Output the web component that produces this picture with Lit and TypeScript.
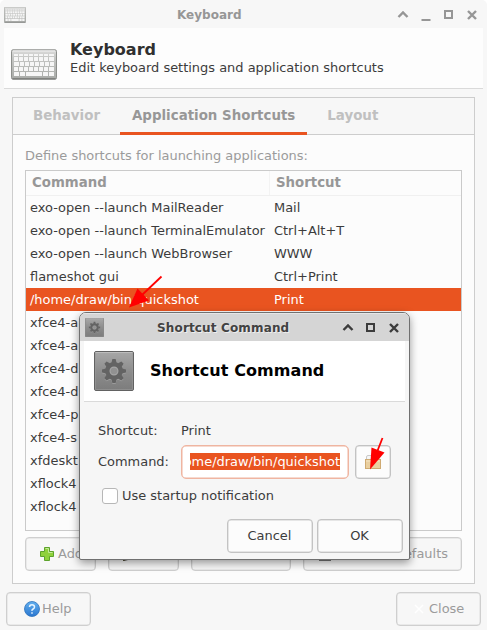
import { LitElement, html, svg, css } from "lit";
import { customElement } from "lit/decorators.js";
import { classMap } from "lit/directives/class-map.js";

const rows: [string, string][] = [
  ["exo-open --launch MailReader", "Mail"],
  ["exo-open --launch TerminalEmulator", "Ctrl+Alt+T"],
  ["exo-open --launch WebBrowser", "WWW"],
  ["flameshot gui", "Ctrl+Print"],
  ["/home/draw/bin/quickshot", "Print"],
  ["xfce4-a", ""],
  ["xfce4-a", ""],
  ["xfce4-d", ""],
  ["xfce4-d", ""],
  ["xfce4-p", ""],
  ["xfce4-s", ""],
  ["xfdeskt", ""],
  ["xflock4", ""],
  ["xflock4", ""],
];
const selectedRow = 4;

// top, height and left edges of the keys in each row
const keyRows: [number, number, number[]][] = [
  [5, 2, [3, 8, 13, 18, 23, 28, 33, 38]],
  [8, 4, [3, 8, 13, 18, 23, 28, 33, 38]],
  [13, 4, [3, 9, 14, 19, 24, 29, 34, 39]],
  [18, 4, [3, 8, 13, 18, 23, 28, 33, 38]],
  [23, 4, [3, 9, 15, 32, 38]],
];

const keyboard = (w: number, h: number) => html`
  <svg width=${w} height=${h} viewBox="0 0 46 31" preserveAspectRatio="none">
    <defs>
      <linearGradient id="kb" x1="0" y1="0" x2="0" y2="1">
        <stop offset="0" stop-color="#dededd" /><stop offset="0.25" stop-color="#c6c7c5" /><stop offset="1" stop-color="#a9aba8" />
      </linearGradient>
    </defs>
    <rect x=".5" y=".8" width="45" height="29.4" rx="1.5" fill="url(#kb)" stroke="#8d8f8c" />
    <path d="M1.5 29.8h43" stroke="#747673" stroke-width="1" />
    <path d="M2 2h42" stroke="#f0f0f0" stroke-width="1" />
    ${keyRows.map(([y, kh, xs]) =>
      xs.map((x, i) => svg`<rect x=${x} y=${y} width=${(xs[i + 1] ?? 44) - x - 1} height=${kh} rx=".3" fill="#f6f6f6" />`)
    )}
  </svg>`;

const teeth = [0, 45, 90, 135, 180, 225, 270, 315];

const gear = (s: number) => html`
  <svg width=${s} height=${s} viewBox="0 0 40 40">
    <defs>
      <linearGradient id="gb" x1="0" y1="0" x2="0" y2="1">
        <stop offset="0" stop-color="#a8a8a8" /><stop offset=".5" stop-color="#8d8d8d" /><stop offset="1" stop-color="#7c7c7c" />
      </linearGradient>
    </defs>
    <rect x=".5" y=".5" width="39" height="39" rx="1.5" fill="url(#gb)" stroke="#626262" />
    <path d="M1.5 1.5h37" stroke="#bdbdbd" />
    <path d="M1.5 2v36.5h37V2" fill="none" stroke="#999" stroke-opacity=".6" />
    <g transform="translate(20 20.700)" fill="#a2a2a2"><circle r="9" />
      ${teeth.map((a) => svg`<path transform=${`rotate(${a})`} d="M-2.6-8L-1.6-12h3.2L2.6-8z" />`)}
    </g>
    <g transform="translate(20 20)" fill="#636363"><circle r="8.9" />
      ${teeth.map((a) => svg`<path transform=${`rotate(${a})`} d="M-2.6-8L-1.6-12h3.2L2.6-8z" />`)}
      <circle r="3.9" fill="#919191" stroke="#a5a5a5" stroke-width="1.2" />
    </g>
  </svg>`;

const chevron = svg`<path d="M1.5 8L6 3.5 10.5 8" fill="none" stroke="currentColor" stroke-width="2.4" />`;
const minimize = svg`<path d="M1.5 11h9" stroke="currentColor" stroke-width="2" />`;
const maximize = svg`<rect x="2" y="2" width="7" height="7" fill="none" stroke="currentColor" stroke-width="2" />`;
const cross = svg`<path d="M2 2l8 8M10 2l-8 8" stroke="currentColor" stroke-width="2.4" />`;
const control = (glyph: unknown) => html`<svg width="12" height="12" viewBox="0 0 12 12">${glyph}</svg>`;

@customElement("shortcut-dialog")
class ShortcutDialog extends LitElement {
  static styles = css`
    :host {
      display: block; box-sizing: border-box; width: 331px; height: 248px;
      background: #f6f6f6; border: 1px solid #707070; border-radius: 7px 7px 2px 2px;
      box-shadow: 0 3px 9px rgba(0, 0, 0, 0.4); overflow: hidden; color: #3c3c3c;
    }
    svg { display: block; flex: none; }
    .bar { display: flex; align-items: center; height: 28px; padding: 0 9px 0 5px; background: #d5d5d5; box-shadow: inset 0 1px #e6e6e6; box-sizing: border-box; }
    .title { flex: 1; padding: 1px 0 0 53px; font-size: 12px; font-weight: bold; text-shadow: 1px 1px #eee; color: #424242; letter-spacing: 0.15px; }
    .controls { display: flex; gap: 11px; padding-top: 1px; color: #3c3c3c; }
    .head { display: flex; align-items: center; gap: 16px; height: 60px; margin: 0 4px; padding-left: 10px; background: #fff; border-bottom: 1px solid #dadada; color: #000; font-size: 16px; font-weight: bold; letter-spacing: 0.07px; }
    .line { display: flex; align-items: center; padding-left: 18px; }
    .name { width: 83px; }
    .short { height: 24px; margin-top: 17px; }
    .cmd { height: 34px; margin-top: 2px; }
    .entry { box-sizing: border-box; width: 168px; height: 34px; border: 1px solid #efb5a1; box-shadow: inset 0 0 0 0.5px #efb5a1; border-radius: 5px; background: #fff; padding: 7px 8px; }
    .sel { display: flex; justify-content: flex-end; overflow: hidden; height: 17px; line-height: 17px; background: #e95420; color: #fff; white-space: nowrap; }
    .btn { box-sizing: border-box; height: 34px; display: flex; align-items: center; justify-content: center; border: 1px solid #c3c3c3; border-radius: 4px; background: #fcfcfc; box-shadow: inset 0 0 0 0.5px #d0d0d0; }
    .browse { width: 36px; margin-left: 6px; }
    .check { height: 17px; margin-top: 8px; padding-left: 22px; gap: 4px; }
    .box { box-sizing: border-box; width: 16px; height: 16px; border: 1px solid #b7b7b7; border-radius: 3px; background: #fff; }
    .actions { display: flex; justify-content: flex-end; gap: 4px; margin: 15px 6px 0 0; }
    .action { width: 86px; padding-right: 1px; }
  `;
  render() {
    return html`
      <div class="bar">${gear(19)}<div class="title">Shortcut Command</div>
        <div class="controls">${[chevron, maximize, cross].map(control)}</div></div>
      <div class="head">${gear(40)}<span>Shortcut Command</span></div>
      <div class="line short"><span class="name">Shortcut:</span><span>Print</span></div>
      <div class="line cmd"><span class="name">Command:</span>
        <div class="entry"><div class="sel"><span>/home/draw/bin/quickshot</span></div></div>
        <div class="btn browse">
          <svg width="16" height="16" viewBox="0 0 16 16">
            <path d="M1.5 7V3q0-1.5 1.500-1.500h4L8.500 3H14v4z" fill="#f5f5f5" stroke="#c9c9c9" />
            <rect x=".5" y="5.500" width="15" height="9" fill="#e9cf9f" stroke="#cfaa72" />
            <path d="M1 7h14" stroke="#f5e4c4" />
          </svg>
        </div></div>
      <div class="line check"><span class="box"></span><span>Use startup notification</span></div>
      <div class="actions"><div class="btn action">Cancel</div><div class="btn action">OK</div></div>
    `;
  }
}

@customElement("app-root")
class AppRoot extends LitElement {
  static styles = css`
    :host {
      display: flex; flex-direction: column; position: relative; box-sizing: border-box;
      width: 487px; height: 630px; overflow: hidden; background: #f7f7f7; border-radius: 5px 5px 0 0;
      font: 12.960px/16px "DejaVu Sans", sans-serif; color: #3c3c3c; white-space: nowrap;
    }
    svg { display: block; flex: none; }
    .bar { display: flex; align-items: center; height: 28px; padding: 1px 9px 0 4px; box-sizing: border-box; color: #969696; }
    .title { flex: 1; padding-left: 151px; font-size: 12px; font-weight: bold; }
    .controls { display: flex; gap: 11px; }
    .head { display: flex; height: 60px; margin: 0 4px; background: #fdfdfd; border-bottom: 1px solid #dadada; }
    .logo { margin: 21px 13px 0 7px; }
    .heading { font-size: 16px; font-weight: bold; line-height: 19px; margin: 12px 0 1px; color: #303030; }
    .book { box-sizing: border-box; width: 463px; height: 487px; margin: 8px 12px 0; border: 1px solid #cdcdcd; background: #fcfcfc; }
    .tabs { display: flex; height: 37px; box-sizing: border-box; border-bottom: 1px solid #cdcdcd; background: #f7f7f7; font-size: 13.400px; font-weight: bold; color: #c0c0c0; }
    .tab { height: 37px; box-sizing: border-box; line-height: 35px; padding: 0 20px; }
    .tab.active { padding: 0 12px; border-bottom: 3px solid #e95420; color: #979797; }
    .hint { height: 16px; margin: 13px 0 0 12px; color: #9b9b9b; }
    .tree { box-sizing: border-box; width: 437px; height: 361px; margin: 6px 0 0 12px; border: 1px solid #cacaca; }
    .row { display: flex; height: 23px; line-height: 24px; }
    .row.selected { background: #e95420; color: #fff; }
    .first { width: 244px; box-sizing: border-box; padding-left: 4px; }
    .second { padding-left: 4px; }
    .row.cols { height: 25px; box-sizing: border-box; line-height: 23px; border-bottom: 1px solid #f0f0f0; color: #979797; font-size: 13.333px; font-weight: bold; }
    .cols .first { padding-left: 6px; border-right: 1px solid #f3f3f3; }
    .cols .second { padding-left: 6px; }
    .buttons { display: flex; gap: 12px; margin: 6px 0 0 12px; }
    .btn { display: flex; align-items: center; box-sizing: border-box; height: 34px; border: 1px solid #cfcfcf; border-radius: 4px; background: #f7f7f7; color: #9b9b9b; box-shadow: inset 0 0 0 0.5px #dcdcdc; padding-bottom: 1px; }
    .btn span { padding-top: 1px; }
    .add { width: 71px; padding-left: 13px; gap: 3px; }
    .edit { width: 71px; padding-left: 13px; align-items: flex-end; }
    .remove { width: 100px; }
    .reset { width: 159px; padding: 0 13px 1px 15px; justify-content: space-between; }
    .edit-icon { margin-bottom: 7px; }
    .footer { display: flex; justify-content: space-between; margin: 8px 6px 0; }
    .foot { width: 85px; padding-left: 17px; gap: 2px; }
    .close { padding-left: 14px; gap: 2px; }
    .dialog { position: absolute; left: 79px; top: 312px; }
    .arrows { position: absolute; left: 0; top: 0; }
  `;
  render() {
    return html`
      <div class="bar">${keyboard(22, 16)}<div class="title">Keyboard</div>
        <div class="controls">${[chevron, minimize, maximize, cross].map(control)}</div></div>
      <div class="head"><div class="logo">${keyboard(46, 31)}</div>
        <div><div class="heading">Keyboard</div><div>Edit keyboard settings and application shortcuts</div></div></div>
      <div class="book">
        <div class="tabs"><div class="tab">Behavior</div><div class="tab active">Application Shortcuts</div><div class="tab">Layout</div></div>
        <div class="hint">Define shortcuts for launching applications:</div>
        <div class="tree">
          <div class="row cols"><span class="first">Command</span><span class="second">Shortcut</span></div>
          ${rows.map(([command, key], i) => html`<div class=${classMap({ row: true, selected: i === selectedRow })}>
            <span class="first">${command}</span><span class="second">${key}</span></div>`)}
        </div>
        <div class="buttons">
          <div class="btn add">
            <svg width="16" height="16" viewBox="0 0 16 16"><path d="M5.500 1.500h5v4h4v5h-4v4h-5v-4h-4v-5h4z" fill="#8fd13c" stroke="#5da32c" /><path d="M6.500 2.500h3v4h4" fill="none" stroke="#c5e99a" /></svg>
            <span>Add</span></div>
          <div class="btn edit"><svg class="edit-icon" width="16" height="16" viewBox="0 0 16 16"><path d="M1 15l2-5 9-9 3 3-9 9z" fill="#e9c93c" /><path d="M1 15l1-3 4 2z" fill="#222" /></svg></div>
          <div class="btn remove"></div>
          <div class="btn reset"><svg width="12" height="16" viewBox="0 0 12 16"><rect x="0" y="4" width="12" height="11" fill="#777" /></svg><span>Reset to Defaults</span></div>
        </div>
      </div>
      <div class="footer">
        <div class="btn foot">
          <svg width="16" height="16" viewBox="0 0 16 16">
            <defs><linearGradient id="hp" x1="0" y1="0" x2="0" y2="1"><stop offset="0" stop-color="#62b0ef" /><stop offset="1" stop-color="#2a76cf" /></linearGradient></defs>
            <circle cx="8" cy="8" r="7.500" fill="url(#hp)" stroke="#2c71bb" stroke-width=".8" />
            <path d="M5.500 6Q5.500 3.700 8 3.700T10.500 6Q10.500 7.200 9.100 8T8 9.900M8 11.200v1.500" fill="none" stroke="#e6f4ff" stroke-width="1.500" />
          </svg><span>Help</span></div>
        <div class="btn foot close">
          <svg width="16" height="16" viewBox="0 0 16 16"><path d="M4 4l8 8M12 4l-8 8" stroke="#fff" stroke-width="1.500" /></svg><span>Close</span></div>
      </div>
      <shortcut-dialog class="dialog"></shortcut-dialog>
      <svg class="arrows" width="487" height="630" viewBox="0 0 487 630" fill="#f00" stroke="#f00">
        <path d="M161.500 276.500L142 295" stroke-width="1.800" /><path d="M129 307.500L137.500 288.500L149 300.500z" stroke="none" />
        <path d="M382.500 438L377 452" stroke-width="1.800" /><path d="M370 469.500L371.500 447.500L384.500 452.500z" stroke="none" />
      </svg>
    `;
  }
}
